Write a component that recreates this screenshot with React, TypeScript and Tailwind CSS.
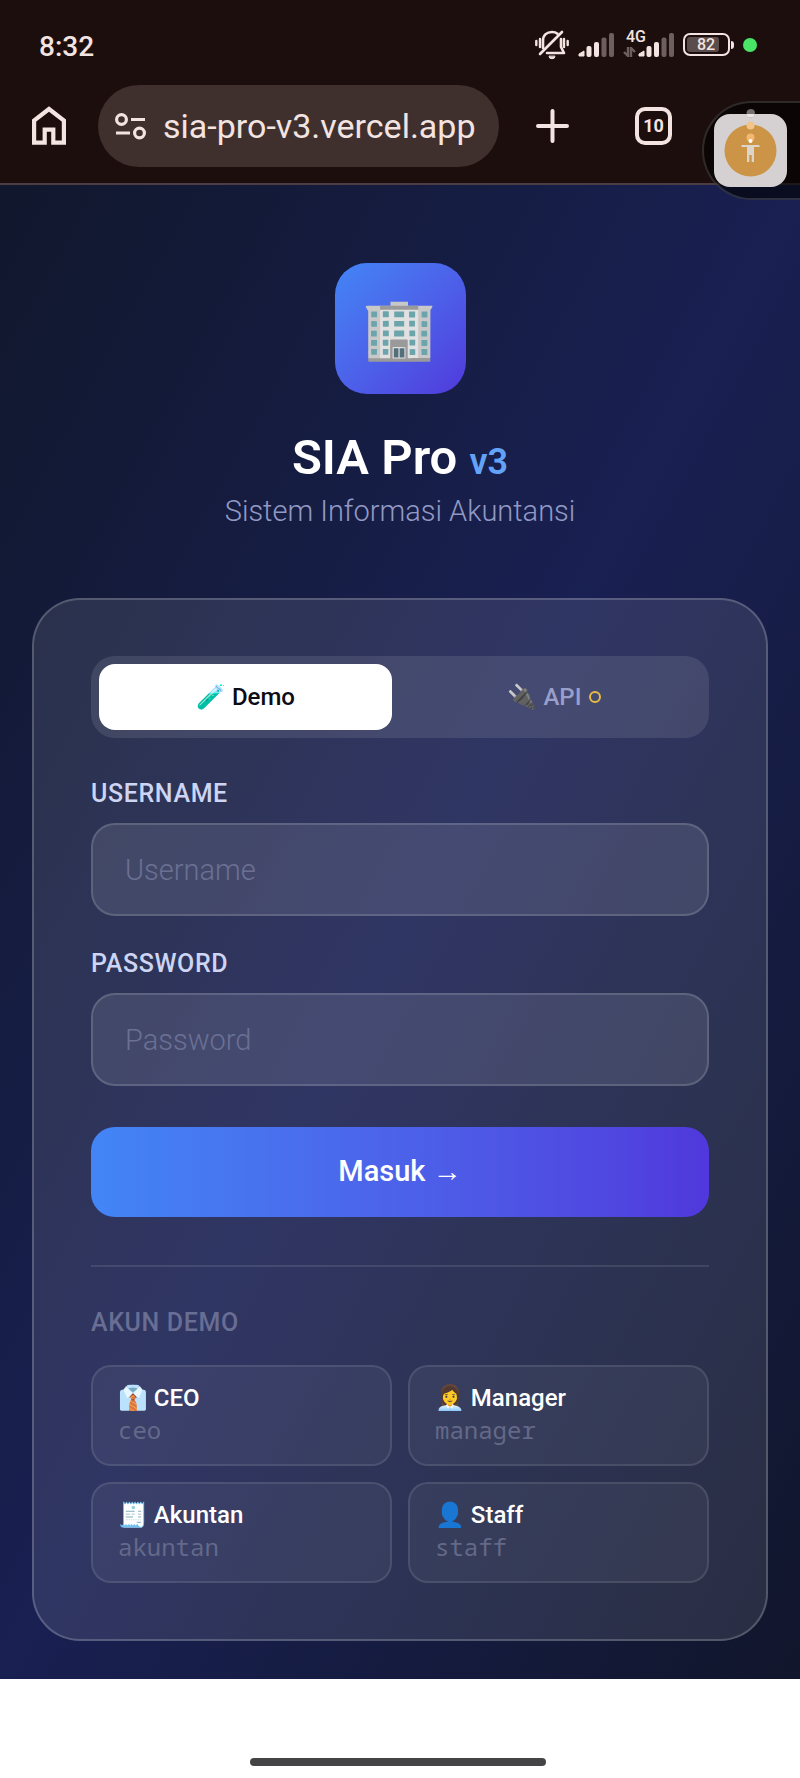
import { useState } from 'react';

const demoAccounts = [
  { icon: '👔', role: 'CEO', username: 'ceo' },
  { icon: '👩‍💼', role: 'Manager', username: 'manager' },
  { icon: '🧾', role: 'Akuntan', username: 'akuntan' },
  { icon: '👤', role: 'Staff', username: 'staff' },
];

function SignalBars() {
  return (
    <svg width="36" height="24" viewBox="0 0 36 24" fill="#f3e4e1">
      <path d="M1 23v-2l5-3v5z" stroke="#f3e4e1" strokeLinejoin="round" />
      <rect x="8.500" y="13" width="5" height="11" rx="2" />
      <rect x="16" y="9" width="5" height="15" rx="2" />
      <rect x="23.500" y="4.500" width="5" height="19.500" rx="2" fill="#6d5f5d" />
      <rect x="31" y="0" width="5" height="24" rx="2" fill="#6d5f5d" />
    </svg>
  );
}

function StatusBar() {
  return (
    <div className="flex h-[85px] items-center justify-between pt-1 pr-[43px] pl-[39px]">
      <span className="pt-1 text-[28px] font-medium">8:32</span>
      <div className="flex items-center gap-[9px]">
        {/* Muted bell */}
        <svg width="34" height="30" viewBox="0 0 34 30" fill="none" stroke="#f3e4e1" strokeWidth="2.600" strokeLinecap="round">
          <path d="M8 18V11C8 5 12 2 17 2c2 0 4 .5 5.500 1.800M26 9v8l3 6H12" strokeLinejoin="round" />
          <path d="M5 24 27 2" />
          <path d="M1.300 11v4M5 9v8M29 9v8M32.700 11v4" strokeWidth="2.400" />
          <path d="M14 26.500a3 2.200 0 0 0 6 0z" fill="#f3e4e1" strokeWidth="1" />
        </svg>
        <SignalBars />
        <div className="relative flex w-[51px] justify-end">
          <SignalBars />
          <span className="absolute -top-1 left-[3px] text-base leading-4 font-medium">4G</span>
          <svg className="absolute bottom-0 left-0" width="13" height="10" viewBox="0 0 13 10" fill="none" stroke="#6d5f5d" strokeWidth="2.400">
            <path d="M5 0v9L1 5M8 10V1l4 4" />
          </svg>
        </div>
        {/* Battery */}
        <div className="flex items-center gap-px">
          <div className="flex h-[23px] w-[47px] items-center rounded-[7px] border-2 border-[#f3e4e1] p-[2px]">
            <span className="flex h-full w-[32px] items-center justify-center rounded-[3px] bg-[#5b4d4c] pl-[6px] text-base font-medium">
              82
            </span>
          </div>
          <div className="h-2 w-[3px] rounded-r bg-[#f3e4e1]" />
        </div>
        <div className="size-[14px] rounded-full bg-[#48e567]" />
      </div>
    </div>
  );
}

function BrowserBar() {
  return (
    <div className="relative flex h-[98px] items-start pr-[45px] pl-8">
      <button aria-label="Home" className="mt-[21px] mr-8">
        <svg width="34" height="39" viewBox="0 0 34 39" fill="none" stroke="#f3e4e1" strokeWidth="4.200">
          <path d="M2.100 36.700V14.500L17 3l14.900 11.500v22.200H21.300V23.600h-8.600v13.100z" />
        </svg>
      </button>
      <div className="flex h-[82px] min-w-0 flex-1 items-center rounded-full bg-[#3f302e] pl-[17px]">
        <svg width="31" height="27" viewBox="0 0 31 27" fill="none" stroke="#f3e4e1" strokeWidth="3.200">
          <circle cx="6.500" cy="6.500" r="4.900" />
          <path d="M16 6.500h14M1 20h14" />
          <circle cx="24.500" cy="20" r="4.900" />
        </svg>
        <input
          aria-label="Address"
          className="ml-[17px] min-w-0 flex-1 bg-transparent text-[34px] outline-none"
          defaultValue="sia-pro-v3.vercel.app"
        />
      </div>
      <button aria-label="New tab" className="mt-6 mr-[66px] ml-[37px]">
        <svg width="33" height="34" viewBox="0 0 33 34" stroke="#f3e4e1" strokeWidth="4" strokeLinecap="round">
          <path d="M16.500 2v30M2 17h29" />
        </svg>
      </button>
      <button className="mt-[22px] mr-[75px] flex h-[38px] w-[37px] items-center justify-center rounded-[10px] border-4 border-[#f3e4e1] text-lg font-bold">
        10
      </button>
      <button aria-label="Menu" className="mt-6 flex flex-col gap-1">
        <span className="size-2 rounded-full bg-[#f3e4e1]" />
        <span className="size-2 rounded-full bg-[#f3e4e1]" />
        <span className="size-2 rounded-full bg-[#f3e4e1]" />
      </button>

      {/* Floating accessibility button */}
      <div className="absolute top-4 right-0 z-10 h-[99px] w-[98px] rounded-l-full border-2 border-r-0 border-white/15 bg-black/60">
        <button
          aria-label="Accessibility"
          className="absolute top-[11px] left-[10px] flex size-[73px] items-center justify-center rounded-2xl bg-[#d5d0d1]"
        >
          <svg className="overflow-visible" width="73" height="73" viewBox="0 0 73 73">
            <circle cx="36.500" cy="36.500" r="26" fill="#cb9447" />
            <circle cx="36.500" cy="-.5" r="4" fill="#777071" />
            <path d="M32.500 0a4 3.500 0 0 0 8 0z" fill="#e9e5e5" />
            <circle cx="36.500" cy="11.500" r="4" fill="#f3c48a" />
            <circle cx="36.500" cy="23.500" r="4" fill="#f4b76f" />
            <circle cx="36.500" cy="27" r="2" fill="#fff" />
            <path d="M27.500 31h18v2H40v15h-2.300v-7h-2.400v7H33V33h-5.500z" fill="#ddd5cc" />
          </svg>
        </button>
      </div>
    </div>
  );
}

function Field({ id, label, type }: { id: string; label: string; type: string }) {
  return (
    <div className="flex flex-col gap-[13px]">
      <label htmlFor={id} className="text-[25px] leading-8 font-medium tracking-wide text-[#cdd4f4] uppercase">
        {label}
      </label>
      <input
        id={id}
        type={type}
        placeholder={label}
        className="h-[93px] w-full rounded-3xl border-2 border-white/15 bg-white/10 px-8 text-[29px] font-light text-white outline-none placeholder:text-[#6b7094]"
      />
    </div>
  );
}

export default function App() {
  const [mode, setMode] = useState('demo');

  return (
    <div className="flex min-h-screen flex-col bg-white font-[Roboto,'Noto_Color_Emoji',sans-serif]">
      <header className="border-b-2 border-[#4a3d43] bg-[#1c0e0d] text-[#f3e4e1]">
        <StatusBar />
        <BrowserBar />
      </header>

      <main className="flex flex-col items-stretch bg-linear-to-br from-[#11172c] via-[#192052] to-[#11162c] px-8 pt-[78px] pb-[38px]">
        <div className="mb-16 flex flex-col items-center">
          <div className="flex size-[131px] items-center justify-center rounded-[32px] bg-linear-to-br from-[#4285f6] to-[#5038dc] text-[60px] leading-none">
            🏢
          </div>
          <h1 className="mt-[34px] text-[49px] leading-[60px] font-semibold text-white">
            SIA Pro <span className="text-4xl text-[#62a3f8]">v3</span>
          </h1>
          <p className="text-[29px] leading-[46px] font-light text-[#9299c4]">Sistem Informasi Akuntansi</p>
        </div>

        <div className="rounded-[48px] border-2 border-white/20 bg-white/10 px-[57px] py-14">
          <div className="grid grid-cols-2 gap-4 rounded-3xl bg-white/10 p-2">
            <button
              onClick={() => setMode('demo')}
              className={`h-[66px] rounded-2xl text-2xl font-medium ${
                mode === 'demo' ? 'bg-white text-[#0c0c14]' : 'text-[#999fcb]'
              }`}
            >
              🧪 Demo
            </button>
            <button
              onClick={() => setMode('api')}
              className={`flex h-[66px] items-center justify-center gap-2 rounded-2xl text-2xl font-medium ${
                mode === 'api' ? 'bg-white text-[#0c0c14]' : 'text-[#999fcb]'
              }`}
            >
              <span>🔌 API</span>
              <span className="size-3 rounded-full border-2 border-[#e6bb45]" />
            </button>
          </div>

          <form className="mt-10" onSubmit={(e) => e.preventDefault()}>
            <div className="flex flex-col gap-8">
              <Field id="username" label="Username" type="text" />
              <Field id="password" label="Password" type="password" />
            </div>
            <button className="mt-[41px] h-[90px] w-full rounded-3xl bg-linear-to-r from-[#4285f6] to-[#5038dc] text-[29px] font-medium text-white">
              Masuk →
            </button>
          </form>

          <div className="mt-12 border-t-2 border-white/10 pt-10">
            <p className="mb-[26px] text-[25px] leading-8 font-medium tracking-wide text-[#686e94]">AKUN DEMO</p>
            <div className="grid grid-cols-2 gap-4">
              {demoAccounts.map((account) => (
                <button
                  key={account.username}
                  className="rounded-[20px] border-2 border-white/10 bg-white/5 px-[25px] pt-[15px] pb-[18px] text-left text-2xl leading-8"
                >
                  <div className="font-medium text-white">
                    {account.icon} {account.role}
                  </div>
                  <div className="font-['Noto_Sans_Mono','DejaVu_Sans_Mono',monospace] text-[#646989]">
                    {account.username}
                  </div>
                </button>
              ))}
            </div>
          </div>
        </div>
      </main>

      {/* Gesture bar */}
      <footer className="flex flex-1 items-end justify-center pr-[5px] pb-3">
        <div className="h-2 w-[296px] rounded-full bg-[#444446]" />
      </footer>
    </div>
  );
}
